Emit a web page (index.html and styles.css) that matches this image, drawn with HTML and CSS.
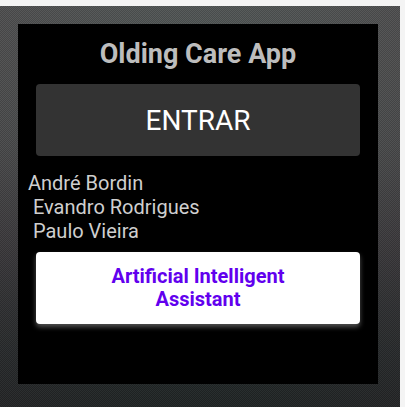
FILE: index.html
```html
<!DOCTYPE html>
<html>
<head>
<meta charset="utf-8">
<link rel="stylesheet" href="styles.css">
</head>
<body>
<div class="frame">
  <div class="panel">
    <h1 class="title">Olding Care App</h1>
    <button class="btn-enter">ENTRAR</button>
    <div class="names">André Bordin
 Evandro Rodrigues
 Paulo Vieira</div>
    <button class="btn-ai">Artificial Intelligent<br>Assistant</button>
  </div>
</div>
</body>
</html>
```
FILE: styles.css
```css
html, body {
  margin: 0;
  padding: 0;
  background: #f4f4f4;
  width: 405px;
  height: 407px;
  overflow: hidden;
  font-family: Roboto, "Noto Sans", sans-serif;
}
.frame {
  margin-top: 6px;
  width: 400px;
  height: 401px;
  box-sizing: border-box;
  padding: 18px 0 0 18px;
  background:
    repeating-conic-gradient(rgba(0,0,0,0.14) 0 25%, rgba(255,255,255,0.03) 0 50%) 0 0 / 2px 2px,
    radial-gradient(ellipse at 50% 45%, rgba(0,0,0,0) 40%, rgba(70,40,50,0.2) 100%),
    linear-gradient(#555b5a 0%, #4c5050 35%, #3c3d3f 60%, #252d2d 85%, #1d2625 100%);
}
.panel {
  width: 360px;
  height: 360px;
  background: #000;
  box-sizing: border-box;
  padding: 14px 18px 0 18px;
  display: flex;
  flex-direction: column;
}
.title {
  margin: 0;
  font-size: 27px;
  line-height: 32px;
  font-weight: 700;
  color: #bdbdbd;
  text-align: center;
}
.btn-enter {
  margin-top: 14px;
  height: 72px;
  border: none;
  border-radius: 4px;
  background: #333333;
  color: #ffffff;
  font-family: Roboto, sans-serif;
  font-size: 28px;
  font-weight: 400;
  padding: 0;
}
.names {
  margin: 15px 0 0 -8px;
  white-space: pre;
  font-size: 20px;
  line-height: 24px;
  color: #cfcfcf;
}
.btn-ai {
  margin-top: 9px;
  height: 72px;
  border: none;
  border-radius: 4px;
  background: #ffffff;
  color: #6200ee;
  font-family: Roboto, sans-serif;
  font-size: 20px;
  line-height: 23px;
  font-weight: 700;
  padding: 0;
  box-shadow: 0 3px 5px rgba(150,150,150,0.55);
}
```
